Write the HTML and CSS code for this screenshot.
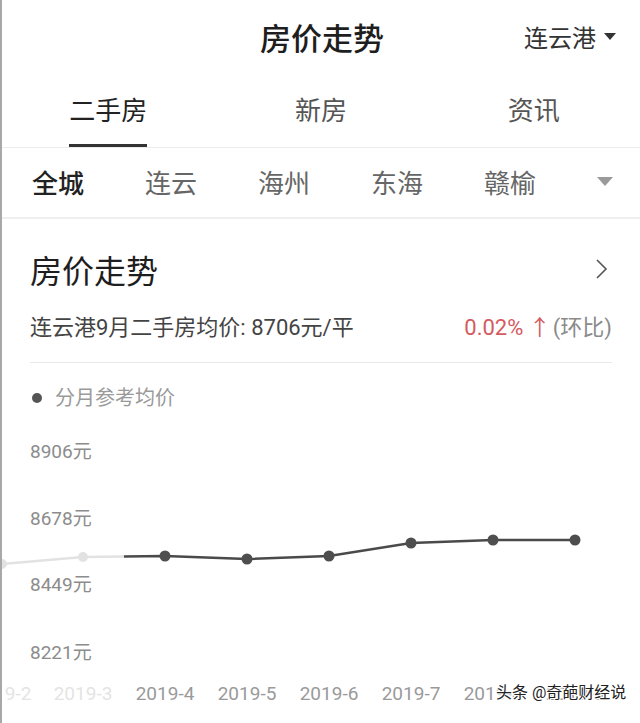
FILE: index.html
```html
<!DOCTYPE html>
<html lang="zh-CN">
<head>
<meta charset="UTF-8">
<meta name="viewport" content="width=device-width, initial-scale=1.0">
<title>房价走势</title>
<link rel="stylesheet" href="styles.css">
</head>
<body>

<div class="page">
  <header class="topbar">
    <h1 class="topbar-title">房价走势</h1>
    <div class="city">连云港<span class="caret"></span></div>
  </header>

  <nav class="tabs">
    <div class="tab"><span class="tab-text active">二手房</span></div>
    <div class="tab"><span class="tab-text">新房</span></div>
    <div class="tab"><span class="tab-text">资讯</span></div>
  </nav>

  <div class="areas">
    <span class="area active">全城</span>
    <span class="area">连云</span>
    <span class="area">海州</span>
    <span class="area">东海</span>
    <span class="area">赣榆</span>
    <span class="area-more"></span>
  </div>

  <section class="trend">
    <div class="trend-head">
      <h2>房价走势</h2>
      <svg class="chevron" width="14" height="22" viewBox="0 0 14 22">
        <polyline points="2,2 11,11 2,20" fill="none" stroke="#555" stroke-width="1.6"/>
      </svg>
    </div>

    <div class="trend-sum">
      <span>连云港9月二手房均价: 8706元/平</span>
      <span class="rate"><span class="up">0.02% ↑</span>(环比)</span>
    </div>

    <div class="legend"><i class="dot"></i>分月参考均价</div>

    <svg class="chart" width="640" height="311" viewBox="0 412 640 311">
      <g class="ylab">
        <text x="28" y="459">8906元</text>
        <text x="28" y="526">8678元</text>
        <text x="28" y="592">8449元</text>
        <text x="28" y="660">8221元</text>
      </g>

      <polyline points="0,565 81,558 122,557.5" fill="none" stroke="#e2e2e2" stroke-width="2.5"/>
      <circle cx="0" cy="565" r="5" fill="#e2e2e2"/>
      <circle cx="81" cy="558" r="5" fill="#e2e2e2"/>

      <polyline points="122,557.5 163,557 245,560 327,557 409,544 491,541 573,541" fill="none" stroke="#4a4a4a" stroke-width="2.5"/>
      <g fill="#4e4e4e">
        <circle cx="163" cy="557" r="5.5"/>
        <circle cx="245" cy="560" r="5.5"/>
        <circle cx="327" cy="557" r="5.5"/>
        <circle cx="409" cy="544" r="5.5"/>
        <circle cx="491" cy="541" r="5.5"/>
        <circle cx="573" cy="541" r="5.5"/>
      </g>

      <g class="xlab">
        <text class="faded" x="0" y="701">2019-2</text>
        <text class="faded" x="81" y="701">2019-3</text>
        <text x="163" y="701">2019-4</text>
        <text x="245" y="701">2019-5</text>
        <text x="327" y="701">2019-6</text>
        <text x="409" y="701">2019-7</text>
        <text x="491" y="701">2019-8</text>
        <text x="573" y="701">2019-9</text>
      </g>
    </svg>
  </section>

  <div class="mark">头条 @奇葩财经说</div>
</div>

</body>
</html>
```

FILE: styles.css
```css
* {
  box-sizing: border-box;
}

body {
  margin: 0;
  background-color: #fff;
  font-family: Roboto, "Noto Sans CJK SC", sans-serif;
  color: #222;
}

.page {
  position: relative;
  width: 640px;
  height: 723px;
  overflow: hidden;
  border-left: 2px solid #a8a8a8;
}

.topbar {
  display: grid;
  grid-template-columns: 1fr auto 1fr;
  align-items: center;
  height: 72px;
}

.topbar-title {
  grid-column: 2;
  margin: 0;
  font-size: 31px;
  font-weight: 500;
  color: #1e1e1e;
  padding-left: 2px;
}

.city {
  grid-column: 3;
  justify-self: end;
  display: flex;
  align-items: center;
  padding-right: 24px;
  font-size: 24px;
  color: #333;
}

.caret {
  margin-left: 8px;
  width: 0;
  height: 0;
  border-left: 6px solid transparent;
  border-right: 6px solid transparent;
  border-top: 7px solid #333;
}

.tabs {
  display: grid;
  grid-template-columns: 1fr 1fr 1fr;
  height: 76px;
  border-bottom: 1px solid #ececec;
}

.tab {
  display: flex;
  justify-content: center;
  align-items: flex-end;
}

.tab-text {
  line-height: 36px;
  padding-bottom: 15px;
  border-bottom: 3px solid transparent;
  font-size: 26px;
  color: #555;
}

.tab-text.active {
  color: #222;
  border-bottom-color: #333;
}

.areas {
  display: flex;
  align-items: center;
  gap: 61px;
  height: 71px;
  padding: 0 29px 3px 30px;
  border-bottom: 2px solid #efefef;
  white-space: nowrap;
}

.area {
  flex-shrink: 0;
  font-size: 26px;
  color: #666;
}

.area.active {
  color: #222;
  font-weight: 500;
}

.area-more {
  flex-shrink: 0;
  margin-left: auto;
  width: 0;
  height: 0;
  border-left: 8px solid transparent;
  border-right: 8px solid transparent;
  border-top: 9px solid #9a9a9a;
}

.trend {
  padding: 0 28px;
}

.trend-head {
  display: flex;
  justify-content: space-between;
  align-items: center;
  margin-top: 30px;
  height: 40px;
}

.trend-head h2 {
  margin: 0;
  font-size: 32px;
  font-weight: 400;
  color: #1e1e1e;
}

.chevron {
  margin-right: 3px;
}

.trend-sum {
  display: flex;
  justify-content: space-between;
  align-items: center;
  margin-top: 24px;
  line-height: 30px;
  padding-bottom: 19px;
  border-bottom: 1px solid #e8e8e8;
  font-size: 22px;
  color: #444;
}

.rate {
  color: #8a8a8a;
}

.up {
  color: #d45a5f;
  margin-right: 2px;
}

.legend {
  display: flex;
  align-items: center;
  margin-top: 22px;
  line-height: 26px;
  font-size: 20px;
  color: #9a9a9a;
}

.dot {
  width: 10px;
  height: 10px;
  margin: 0 13px 0 2px;
  border-radius: 50%;
  background-color: #555;
}

.chart {
  display: block;
  margin: 0 -28px;
}

.ylab text {
  font-size: 19px;
  fill: #8c8c8c;
}

.xlab text {
  font-size: 19px;
  fill: #9a9a9a;
  text-anchor: middle;
}

.xlab text.faded {
  fill: #e4e4e4;
}

.mark {
  position: absolute;
  left: 494px;
  top: 680px;
  font-size: 16px;
  line-height: 26px;
  color: #222;
  text-shadow: 1px 0 0 #fff, -1px 0 0 #fff, 0 1px 0 #fff, 0 -1px 0 #fff,
    1px 1px 0 #fff, -1px -1px 0 #fff, 1px -1px 0 #fff, -1px 1px 0 #fff;
}
```
